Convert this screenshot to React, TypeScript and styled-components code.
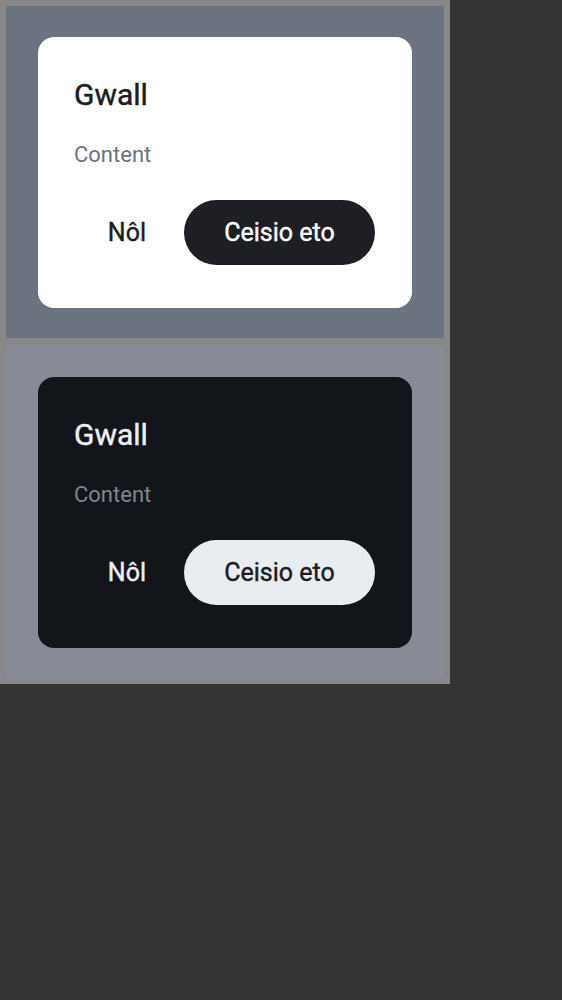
import React from "react";
import styled, { createGlobalStyle } from "styled-components";

type Mode = "light" | "dark";

const palette = {
    light: {
        stage: "#6b7280",
        card: "#ffffff",
        title: "#1c1d21",
        body: "#6b7280",
        ghost: "#1c1d21",
        fill: "#1d1f24",
        fillText: "#ffffff",
    },
    dark: {
        stage: "#868b96",
        card: "#12151a",
        title: "#eef0f4",
        body: "#80858f",
        ghost: "#eef0f4",
        fill: "#e9ecf1",
        fillText: "#1a1c20",
    },
};

function Dialog ({ mode }: { mode: Mode })
{
    return (
        <Stage $mode={mode}>
            <Card $mode={mode} role="dialog">
                <Title $mode={mode}>Gwall</Title>
                <Body $mode={mode}>Content</Body>
                <Actions>
                    <GhostButton $mode={mode}>Nôl</GhostButton>
                    <FillButton $mode={mode}>Ceisio eto</FillButton>
                </Actions>
            </Card>
        </Stage>
    );
}

export default function App ()
{
    return (
        <>
            <Global/>
            <Frame>
                <Dialog mode="light"/>
                <Dialog mode="dark"/>
            </Frame>
        </>
    );
}

/*
|--------------------------------------------------------------------------
| Styled
|--------------------------------------------------------------------------
*/

const Global = createGlobalStyle`
    html, body {
        margin: 0;
        padding: 0;
        background: #333333;
        font-family: Roboto, "Noto Sans", sans-serif;
    }
`;

const Frame = styled.div`
    width: 438px;
    padding: 6px;
    display: grid;
    gap: 8px;
    background: #888888;
`;

const Stage = styled.div<{ $mode: Mode }>`
    padding: 31px 32px 30px;
    background: ${p => palette[p.$mode].stage};
`;

const Card = styled.div<{ $mode: Mode }>`
    box-sizing: border-box;
    height: 271px;
    padding: 40px 37px 43px 36px;
    border-radius: 16px;
    background: ${p => palette[p.$mode].card};
    display: flex;
    flex-direction: column;
`;

const Title = styled.h2<{ $mode: Mode }>`
    margin: 0;
    font-size: 30px;
    line-height: 36px;
    font-weight: 400;
    -webkit-text-stroke: 0.45px currentColor;
    color: ${p => palette[p.$mode].title};
`;

const Body = styled.p<{ $mode: Mode }>`
    margin: 28px 0 0;
    font-size: 22px;
    line-height: 28px;
    color: ${p => palette[p.$mode].body};
`;

const Actions = styled.div`
    margin-top: auto;
    display: flex;
    justify-content: flex-end;
    gap: 8px;
`;

const BaseButton = styled.button`
    all: unset;
    box-sizing: border-box;
    height: 65px;
    border-radius: 33px;
    font-family: Roboto, "Noto Sans", sans-serif;
    font-size: 25px;
    font-weight: 400;
    -webkit-text-stroke: 0.4px currentColor;
    display: inline-flex;
    align-items: center;
    justify-content: center;
    cursor: pointer;
`;

const GhostButton = styled(BaseButton)<{ $mode: Mode }>`
    padding: 0 30px;
    color: ${p => palette[p.$mode].ghost};
`;

const FillButton = styled(BaseButton)<{ $mode: Mode }>`
    width: 191px;
    background: ${p => palette[p.$mode].fill};
    color: ${p => palette[p.$mode].fillText};
`;
